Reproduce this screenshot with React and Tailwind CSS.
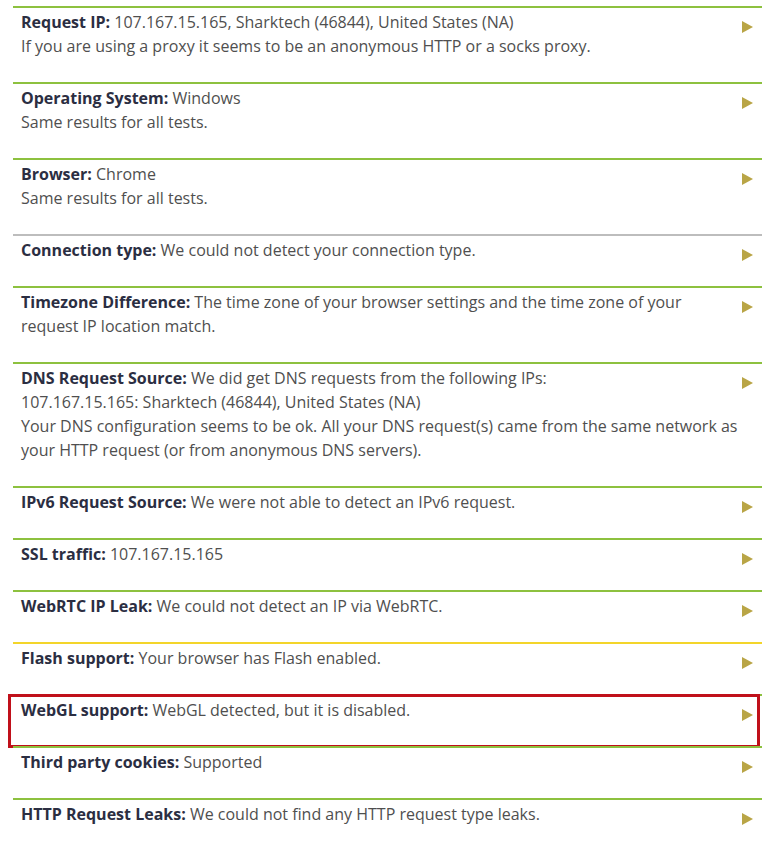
import React from "react";

const rows = [
  {
    label: "Request IP:",
    lines: [
      " 107.167.15.165, Sharktech (46844), United States (NA)",
      "If you are using a proxy it seems to be an anonymous HTTP or a socks proxy.",
    ],
    line: "border-[#8dc13f]",
  },
  { label: "Operating System:", lines: [" Windows", "Same results for all tests."], line: "border-[#8dc13f]" },
  { label: "Browser:", lines: [" Chrome", "Same results for all tests."], line: "border-[#8dc13f]" },
  { label: "Connection type:", lines: [" We could not detect your connection type."], line: "border-[#bdbdbd]" },
  {
    label: "Timezone Difference:",
    lines: [
      " The time zone of your browser settings and the time zone of your",
      "request IP location match.",
    ],
    line: "border-[#8dc13f]",
  },
  {
    label: "DNS Request Source:",
    lines: [
      " We did get DNS requests from the following IPs:",
      "107.167.15.165: Sharktech (46844), United States (NA)",
      "Your DNS configuration seems to be ok. All your DNS request(s) came from the same network as",
      "your HTTP request (or from anonymous DNS servers).",
    ],
    line: "border-[#8dc13f]",
  },
  { label: "IPv6 Request Source:", lines: [" We were not able to detect an IPv6 request."], line: "border-[#8dc13f]" },
  { label: "SSL traffic:", lines: [" 107.167.15.165"], line: "border-[#8dc13f]" },
  { label: "WebRTC IP Leak:", lines: [" We could not detect an IP via WebRTC."], line: "border-[#8dc13f]" },
  { label: "Flash support:", lines: [" Your browser has Flash enabled."], line: "border-[#f3d52a]" },
  { label: "WebGL support:", lines: [" WebGL detected, but it is disabled."], line: "border-[#8dc13f]", marked: true },
  { label: "Third party cookies:", lines: [" Supported"], line: "border-[#8dc13f]" },
  { label: "HTTP Request Leaks:", lines: [" We could not find any HTTP request type leaks."], line: "border-[#8dc13f]" },
];

const Arrow = () => (
  <svg width="11" height="12" viewBox="0 0 11 12" className="mt-[11px] mr-[9px] shrink-0">
    <path d="M0 0 L11 6 L0 12 Z" fill="#b9a546" />
  </svg>
);

const App = () => {
  return (
    <div
      className="bg-white min-h-[847px] pt-[6px] pl-[13px] w-[762px] text-[16px] text-[#4f4f4f]"
      style={{ fontFamily: '"Open Sans", "Noto Sans", sans-serif' }}
    >
      {rows.map((row) => (
        <div key={row.label} className="relative">
          <div className={`flex justify-between border-t-2 ${row.line} pl-2 pt-[2px] pb-[24px]`}>
            <div className="leading-6">
              {row.lines.map((t, i) => (
                <div key={i}>
                  {i === 0 && <span className="font-bold text-[#2b2e42]">{row.label}</span>}
                  {t}
                </div>
              ))}
            </div>
            <Arrow />
          </div>
          {row.marked && (
            <div className="absolute -left-[5px] right-[2px] top-0 bottom-[-2px] border-[3px] border-[#c0101a]" />
          )}
        </div>
      ))}
    </div>
  );
};

export default App;
